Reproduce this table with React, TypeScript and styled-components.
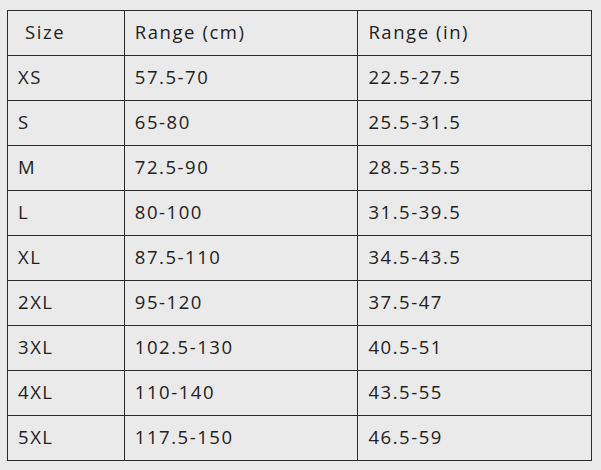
import React from "react";
import styled, { createGlobalStyle } from "styled-components";

const GlobalStyle = createGlobalStyle`
  html, body {
    margin: 0;
    background: #eaeaea;
  }
`;

const Page = styled.div`
  padding: 10px 9px 10px 7px;
`;

const Table = styled.table`
  width: 585px;
  border-collapse: collapse;
  table-layout: fixed;
  font-family: "Open Sans", "Noto Sans", sans-serif;
  font-size: 18.5px;
  letter-spacing: 1.55px;
  color: #222;
`;

const Row = styled.tr`
  height: 45px;
`;

const Cell = styled.td<{ $indent?: boolean }>`
  border: 1px solid #2a2a2a;
  padding: 0 0 3px ${(p) => (p.$indent ? 17 : 10)}px;
  text-align: left;
  font-weight: 400;
  vertical-align: middle;
  white-space: nowrap;
`;

const rows = [
  ["XS", "57.5-70", "22.5-27.5"],
  ["S", "65-80", "25.5-31.5"],
  ["M", "72.5-90", "28.5-35.5"],
  ["L", "80-100", "31.5-39.5"],
  ["XL", "87.5-110", "34.5-43.5"],
  ["2XL", "95-120", "37.5-47"],
  ["3XL", "102.5-130", "40.5-51"],
  ["4XL", "110-140", "43.5-55"],
  ["5XL", "117.5-150", "46.5-59"],
];

const App = () => {
  return (
    <Page>
      <GlobalStyle />
      <Table>
        <colgroup>
          <col style={{ width: "20%" }} />
          <col style={{ width: "40%" }} />
          <col style={{ width: "40%" }} />
        </colgroup>
        <thead>
          <Row>
            <Cell as="th" $indent>Size</Cell>
            <Cell as="th">Range (cm)</Cell>
            <Cell as="th">Range (in)</Cell>
          </Row>
        </thead>
        <tbody>
          {rows.map((r) => (
            <Row key={r[0]}>
              {r.map((v, i) => (
                <Cell key={i}>{v}</Cell>
              ))}
            </Row>
          ))}
        </tbody>
      </Table>
    </Page>
  );
};

export default App;
